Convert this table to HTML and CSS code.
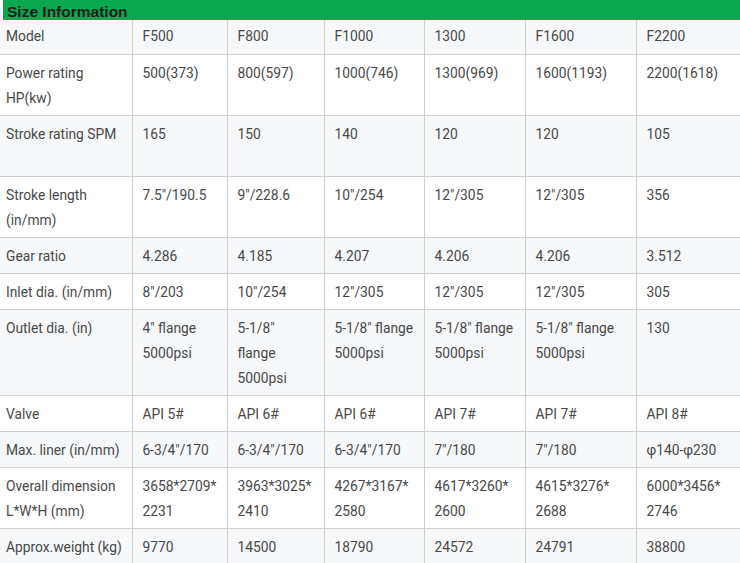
FILE: index.html
```html
<!DOCTYPE html>
<html>
<head>
<meta charset="utf-8">
<link rel="stylesheet" href="styles.css">
</head>
<body>
<div class="title">Size Information</div>
<table class="spec">
<colgroup>
<col class="c1"><col class="c2"><col class="c3"><col class="c4"><col class="c5"><col class="c6"><col class="c7">
</colgroup>
<tr class="r-model alt"><td>Model</td><td>F500</td><td>F800</td><td>F1000</td><td>1300</td><td>F1600</td><td>F2200</td></tr>
<tr class="r2"><td>Power rating HP(kw)</td><td>500(373)</td><td>800(597)</td><td>1000(746)</td><td>1300(969)</td><td>1600(1193)</td><td>2200(1618)</td></tr>
<tr class="r2 alt"><td>Stroke rating SPM</td><td>165</td><td>150</td><td>140</td><td>120</td><td>120</td><td>105</td></tr>
<tr class="r2"><td>Stroke length (in/mm)</td><td>7.5"/190.5</td><td>9"/228.6</td><td>10"/254</td><td>12"/305</td><td>12"/305</td><td>356</td></tr>
<tr class="r1 alt"><td>Gear ratio</td><td>4.286</td><td>4.185</td><td>4.207</td><td>4.206</td><td>4.206</td><td>3.512</td></tr>
<tr class="r1"><td>Inlet dia. (in/mm)</td><td>8"/203</td><td>10"/254</td><td>12"/305</td><td>12"/305</td><td>12"/305</td><td>305</td></tr>
<tr class="r3 alt"><td>Outlet dia. (in)</td><td>4" flange 5000psi</td><td>5-1/8" flange 5000psi</td><td>5-1/8" flange 5000psi</td><td>5-1/8" flange 5000psi</td><td>5-1/8" flange 5000psi</td><td>130</td></tr>
<tr class="r1"><td>Valve</td><td>API 5#</td><td>API 6#</td><td>API 6#</td><td>API 7#</td><td>API 7#</td><td>API 8#</td></tr>
<tr class="r1 alt"><td>Max. liner (in/mm)</td><td>6-3/4"/170</td><td>6-3/4"/170</td><td>6-3/4"/170</td><td>7"/180</td><td>7"/180</td><td>φ140-φ230</td></tr>
<tr class="r2"><td>Overall dimension L*W*H (mm)</td><td>3658*2709*<br>2231</td><td>3963*3025*<br>2410</td><td>4267*3167*<br>2580</td><td>4617*3260*<br>2600</td><td>4615*3276*<br>2688</td><td>6000*3456*<br>2746</td></tr>
<tr class="r1 alt"><td>Approx.weight (kg)</td><td>9770</td><td>14500</td><td>18790</td><td>24572</td><td>24791</td><td>38800</td></tr>
</table>
</body>
</html>
```
FILE: styles.css
```css
html, body {
  margin: 0;
  padding: 0;
  background: #ffffff;
}
body {
  width: 740px;
  height: 563px;
  overflow: hidden;
}
.title {
  margin-left: 3px;
  height: 20px;
  background: #0aa84f;
  color: #1c1c1c;
  font-family: "Liberation Sans", Arial, sans-serif;
  font-weight: bold;
  font-size: 15.5px;
  line-height: 23px;
  padding-left: 4px;
  overflow: hidden;
}
.spec {
  border-collapse: collapse;
  table-layout: fixed;
  width: 740px;
  font-family: Roboto, "Noto Sans", sans-serif;
  font-size: 13.8px;
  color: #484848;
}
.c1 { width: 132px; }
.c2 { width: 95px; }
.c3 { width: 97px; }
.c4 { width: 100px; }
.c5 { width: 101px; }
.c6 { width: 111px; }
.c7 { width: 104px; }
.spec td {
  border: 1px solid #cfcfcf;
  vertical-align: top;
  line-height: 25px;
  padding: 6px 10px 4px 10px;
  box-sizing: border-box;
}
.spec td:first-child {
  border-left: none;
  padding-left: 6px;
  padding-right: 4px;
}
.spec td:last-child {
  border-right: none;
}
.spec tr:first-child td {
  border-top: none;
}
.alt td {
  background: #f7f8fa;
}
.r-model td { height: 34px; padding-top: 4px; }
.r1 td { height: 36px; }
.r2 td { height: 61px; }
.r3 td { height: 86px; }
```
